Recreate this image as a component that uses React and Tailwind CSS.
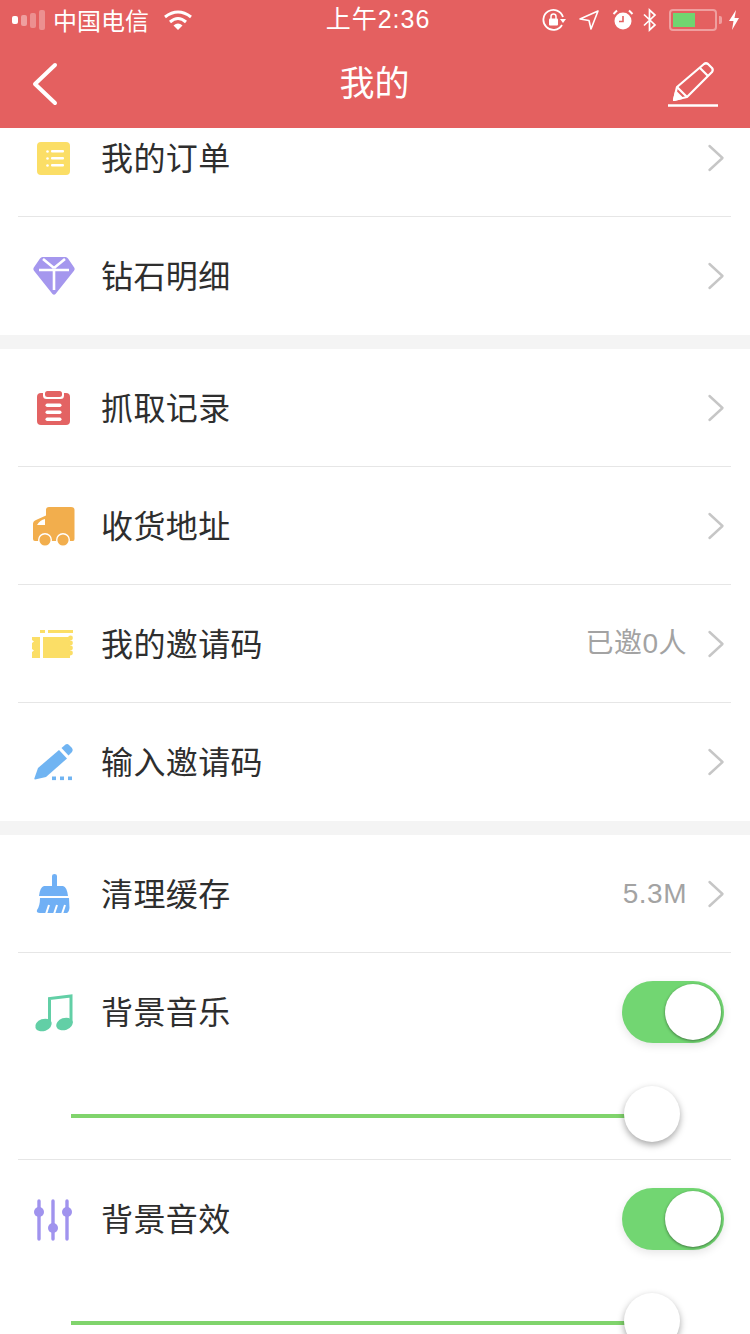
const cjk = { fontFamily: '"Noto Sans CJK SC", sans-serif' }
const latin = { fontFamily: '"Liberation Sans", "Noto Sans CJK SC", sans-serif' }

function Chevron() {
  return (
    <svg width="18" height="28" viewBox="0 0 18 28" fill="none" stroke="#c6c6c6" strokeWidth="2.4" strokeLinecap="round" strokeLinejoin="round">
      <path d="M2.5 2 L15.5 14 L2.5 26" />
    </svg>
  )
}

function IconList() {
  return (
    <svg width="44" height="44" viewBox="0 0 44 44">
      <rect x="5" y="6" width="33" height="33" rx="4" fill="#fbde66" />
      <g fill="#fff">
        <circle cx="15.5" cy="15.5" r="1.3" /><circle cx="15.5" cy="22.5" r="1.3" /><circle cx="15.5" cy="29.5" r="1.3" />
        <rect x="19" y="14" width="13" height="2.6" rx="1" /><rect x="19" y="21" width="13" height="2.6" rx="1" /><rect x="19" y="28" width="13" height="2.6" rx="1" />
      </g>
    </svg>
  )
}

function IconDiamond() {
  return (
    <svg width="44" height="44" viewBox="0 0 44 44">
      <path d="M10.5 3 H33.5 Q35 3 36 4.5 L42.5 14 Q43 15.5 42 16.8 L23.5 40 Q22 41.5 20.5 40 L2 16.8 Q1 15.5 1.5 14 L8 4.5 Q9 3 10.5 3 Z" fill="#a597ee" />
      <path d="M7 16 H37 M22 16 V36 M11 5 L22 14 M33 5 L22 14" stroke="#fff" strokeWidth="2.6" fill="none" />
    </svg>
  )
}

function IconClipboard() {
  return (
    <svg width="44" height="44" viewBox="0 0 44 44">
      <rect x="5" y="7" width="33" height="32" rx="4" fill="#e36363" />
      <rect x="11" y="3" width="21" height="10" rx="3.5" fill="#fff" />
      <rect x="13" y="5" width="17" height="6" rx="2.5" fill="#e36363" />
      <g fill="#fff">
        <rect x="13.5" y="17.5" width="16" height="3.4" rx="1.7" /><rect x="13.5" y="24.5" width="16" height="3.4" rx="1.7" /><rect x="13.5" y="31.5" width="16" height="3.4" rx="1.7" />
      </g>
    </svg>
  )
}

function IconTruck() {
  return (
    <svg width="44" height="44" viewBox="0 0 44 44">
      <path d="M14 6 Q14 3 17 3 H39 Q42.5 3 42.5 6 V35 Q42.5 37 41 37 H3 Q1 37 1 35 V20 Q1 17 4 16 L14 11.5 Z" fill="#f2ae4d" />
      <path d="M5 21 Q8 16 13 15 V21 Z" fill="#fff" />
      <circle cx="13" cy="36" r="6.3" fill="#f2ae4d" stroke="#fff" strokeWidth="1.4" />
      <circle cx="31" cy="36" r="6.3" fill="#f2ae4d" stroke="#fff" strokeWidth="1.4" />
    </svg>
  )
}

function IconTicket() {
  return (
    <svg width="44" height="44" viewBox="0 0 44 44">
      <path d="M0 15 H8 V36 H0 V30 L2 28.5 L0 27 V21 L2 19.5 L0 18 Z M11 15 H38 V36 H11 Z" fill="#fbde66" />
      <path d="M8 8 H13 V11 H8 Z M16 8 H41 V11 H16 Z" fill="#fbde66" />
      <g fill="#fbde66">
        <circle cx="38.5" cy="16" r="2.4" /><circle cx="38.5" cy="21" r="2.4" /><circle cx="38.5" cy="26" r="2.4" /><circle cx="38.5" cy="31" r="2.4" />
      </g>
    </svg>
  )
}

function IconPen() {
  return (
    <svg width="44" height="44" viewBox="0 0 44 44">
      <path d="M3 39.5 Q2 39.5 2.5 38 L6 28 L27 10 L35 18.5 L14 37 Z" fill="#70b4f2" />
      <path d="M29.5 8 L33.5 4.5 Q35.5 3.5 37 5 L40 8 Q41.5 10 40 12 L36.5 15.5 Z" fill="#70b4f2" />
      <rect x="20" y="36.5" width="4" height="3.6" fill="#70b4f2" /><rect x="28" y="36.5" width="4" height="3.6" fill="#70b4f2" /><rect x="36" y="36.5" width="4" height="3.6" fill="#70b4f2" />
    </svg>
  )
}

function IconBroom() {
  return (
    <svg width="44" height="44" viewBox="0 0 44 44">
      <path d="M20 4 Q20 2 22.5 2 Q25 2 25 4 V14 H31 Q35 15 36 24 H7 Q8 15 12 14 H20 Z" fill="#70b0f5" />
      <path d="M8 26 H37 L37.5 36 Q37 40 35 41 H8 Q4 41 5 38 Q8 34 8 26 Z" fill="#70b0f5" />
      <path d="M14 42 L17 33 M22 42 L25 33 M30 42 L33 33" stroke="#fff" strokeWidth="2" fill="none" />
    </svg>
  )
}

function IconMusic() {
  return (
    <svg width="44" height="44" viewBox="0 0 44 44">
      <path d="M17.5 34 V8.5 L39 6 V33" stroke="#62cfa6" strokeWidth="3" fill="none" />
      <ellipse cx="11.5" cy="35" rx="8.5" ry="6" fill="#62cfa6" transform="rotate(-20 11.5 35)" />
      <ellipse cx="32.5" cy="34" rx="8.5" ry="6" fill="#62cfa6" transform="rotate(-20 32.5 34)" />
    </svg>
  )
}

function IconSliders() {
  return (
    <svg width="44" height="44" viewBox="0 0 44 44">
      <g stroke="#a093ee" strokeWidth="3.4" strokeLinecap="round">
        <path d="M7 4 V42 M21 4 V42 M35 4 V42" />
      </g>
      <g fill="#a093ee">
        <circle cx="7" cy="15" r="5" /><circle cx="21" cy="31" r="5" /><circle cx="35" cy="15" r="5" />
      </g>
    </svg>
  )
}

function Row({ icon, label, value, last }) {
  return (
    <div className={`ml-[18px] mr-[19px] h-[118px] flex items-center ${last ? '' : 'border-b border-[#e6e6e6]'}`}>
      <div className="ml-[14px] w-[44px] h-[44px] shrink-0">{icon}</div>
      <div className="ml-[26px] -translate-x-px pb-[4px] flex-1 text-[32px] tracking-[0.4px] text-[#2e2e2e]" style={cjk}>{label}</div>
      {value && <div className="text-[28px] tracking-[0.5px] text-[#a3a3a3] mr-[20px]" style={latin}>{value}</div>}
      <div className="mr-[6px]"><Chevron /></div>
    </div>
  )
}

function SwitchRow({ icon, label, last }) {
  return (
    <div className={`ml-[18px] mr-[19px] ${last ? '' : 'border-b border-[#e6e6e6]'}`}>
      <div className="h-[118px] flex items-center">
        <div className="ml-[14px] w-[44px] h-[44px] shrink-0">{icon}</div>
        <div className="ml-[26px] -translate-x-px pb-[4px] flex-1 text-[32px] tracking-[0.4px] text-[#2e2e2e]" style={cjk}>{label}</div>
        <div className="mr-[7px] w-[102px] h-[62px] rounded-full bg-[#72d672] flex items-center justify-end pr-[3px] shadow-[0_3px_8px_rgba(0,0,0,0.1)]">
          <div className="w-[56px] h-[56px] rounded-full bg-white shadow-[0_1px_3px_rgba(0,0,0,0.45)]"></div>
        </div>
      </div>
      <div className="h-[88px] flex items-center pl-[53px]">
        <div className="mt-[2px] w-[554px] h-[4px] bg-[#80d46c]"></div>
        <div className="-ml-px -mt-[2px] w-[56px] h-[56px] shrink-0 rounded-full bg-white shadow-[0_3px_7px_rgba(0,0,0,0.35)]"></div>
      </div>
    </div>
  )
}

function StatusBar() {
  return (
    <div className="h-[40px] flex items-center pl-[12px] pr-[10px] text-white text-[24px]">
      <div className="flex-1 flex items-center">
        <div className="flex items-center gap-[3px]">
          <div className="w-[6px] h-[8px] rounded-[2px] bg-white"></div>
          <div className="w-[6px] h-[11px] rounded-[2px] bg-white/40"></div>
          <div className="w-[6px] h-[15px] rounded-[2px] bg-white/30"></div>
          <div className="w-[6px] h-[20px] rounded-[2px] bg-white/30"></div>
        </div>
        <span className="ml-[8px] whitespace-nowrap" style={cjk}>中国电信</span>
        <svg className="ml-[14px]" width="30" height="22" viewBox="0 0 30 22" fill="none" stroke="#fff" strokeWidth="3">
          <path d="M2 8 Q15 -2 28 8" /><path d="M7 13 Q15 6 23 13" />
          <path d="M15 21 L10.5 16.5 Q15 12.5 19.5 16.5 Z" fill="#fff" stroke="none" />
        </svg>
      </div>
      <div className="ml-[4px] whitespace-nowrap text-[25px] tracking-[1px]" style={latin}>上午2:36</div>
      <div className="flex-1 flex items-center justify-end">
        <svg width="24" height="24" viewBox="0 0 24 24" fill="none" stroke="#fff" strokeWidth="1.8">
          <path d="M21 9 A10 10 0 1 0 20 17" /><path d="M18 11 H24 L21 15 Z" fill="#fff" stroke="none" />
          <rect x="7" y="10.5" width="9" height="7" rx="1" fill="#fff" stroke="none" />
          <path d="M9 11 V8.5 A2.5 2.5 0 0 1 14 8.5 V11" strokeWidth="1.5" />
        </svg>
        <svg className="ml-[12px]" width="22" height="22" viewBox="0 0 22 22" fill="none" stroke="#fff" strokeWidth="1.6" strokeLinejoin="round">
          <path d="M20 2 L2 10 L11 11.5 L13 20 Z" />
        </svg>
        <svg className="ml-[12px]" width="22" height="22" viewBox="0 0 22 22">
          <circle cx="11" cy="12" r="8.5" fill="#fff" />
          <path d="M11 7 V12.5 H7" stroke="#e46060" strokeWidth="1.6" fill="none" />
          <path d="M1.5 5 L5 1.5 M20.5 5 L17 1.5" stroke="#fff" strokeWidth="2" />
        </svg>
        <svg className="ml-[8px]" width="16" height="24" viewBox="0 0 16 24" fill="none" stroke="#fff" strokeWidth="1.7">
          <path d="M2 6.5 L13 17 L7.5 22 V2 L13 7 L2 17.5" />
        </svg>
        <div className="ml-[11px] w-[48px] h-[22px] rounded-[4px] border-2 border-white/40 p-[2px]">
          <div className="w-[22px] h-full bg-[#70d570]"></div>
        </div>
        <div className="ml-[2px] w-[3px] h-[8px] rounded-r-[2px] bg-white/40"></div>
        <svg className="ml-[6px]" width="12" height="22" viewBox="0 0 12 22">
          <path d="M8 1 L1 12 H5.5 L4 21 L11 9 H6.5 Z" fill="#fff" />
        </svg>
      </div>
    </div>
  )
}

function NavBar() {
  return (
    <div className="h-[88px] flex items-center pl-[31px] pr-[32px] text-white">
      <div className="flex-1">
        <svg width="28" height="44" viewBox="0 0 28 44" fill="none" stroke="#fff" strokeWidth="4" strokeLinecap="round" strokeLinejoin="round">
          <path d="M24 3 L4 22 L24 41" />
        </svg>
      </div>
      <div className="text-[35px] pb-[6px]" style={cjk}>我的</div>
      <div className="flex-1 flex justify-end">
        <svg width="50" height="46" viewBox="0 0 50 46" fill="none" stroke="#fff" strokeWidth="2.2" strokeLinejoin="round">
          <path d="M36 3 Q38 1.5 40 3 L44 7 Q45.5 9 44 11 L19 36 L6 39 L9 26 Z" />
          <path d="M32 7 L40 15 M9 26 L19 36" />
          <path d="M6 39 L8 31 L14 37 Z" fill="#fff" />
          <path d="M0 44.5 H50" strokeWidth="2.6" />
        </svg>
      </div>
    </div>
  )
}

function Gap() {
  return <div className="h-[14px] bg-[#f4f4f4]"></div>
}

export default function App() {
  return (
    <div className="w-[750px] h-[1334px] overflow-hidden bg-white flex flex-col">
      <div className="shrink-0 z-10 bg-[#e46060] h-[128px]">
        <StatusBar />
        <NavBar />
      </div>
      {/* list is scrolled by 29px in the shot */}
      <div className="flex-1 overflow-hidden">
        <div className="-mt-[29px]">
          <Row icon={<IconList />} label="我的订单" />
          <Row icon={<IconDiamond />} label="钻石明细" last />
          <Gap />
          <Row icon={<IconClipboard />} label="抓取记录" />
          <Row icon={<IconTruck />} label="收货地址" />
          <Row icon={<IconTicket />} label="我的邀请码" value="已邀0人" />
          <Row icon={<IconPen />} label="输入邀请码" last />
          <Gap />
          <Row icon={<IconBroom />} label="清理缓存" value="5.3M" />
          <SwitchRow icon={<IconMusic />} label="背景音乐" />
          <SwitchRow icon={<IconSliders />} label="背景音效" last />
        </div>
      </div>
    </div>
  )
}
